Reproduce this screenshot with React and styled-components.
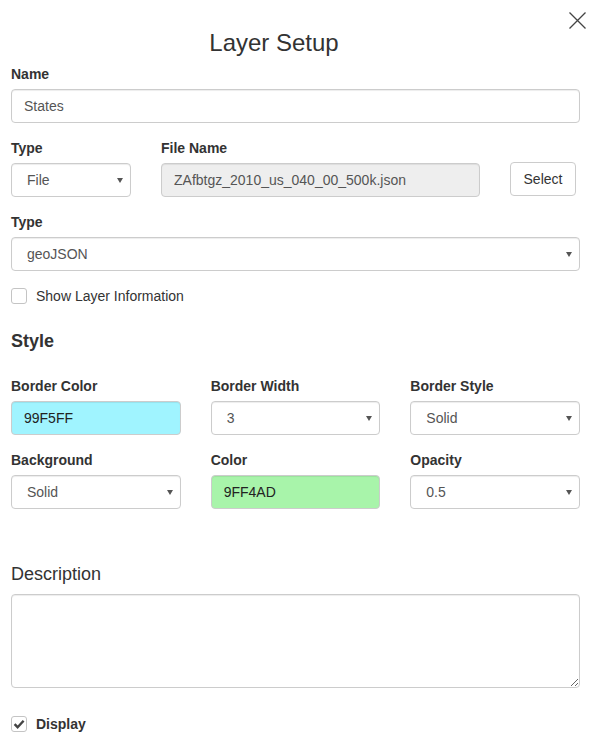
import React from 'react';
import styled, { createGlobalStyle } from 'styled-components';

const GlobalStyle = createGlobalStyle`
  html, body {
    margin: 0;
    padding: 0;
    background: #fff;
  }
  body {
    font-family: "Liberation Sans", Arial, Helvetica, sans-serif;
    font-size: 14px;
    line-height: 20px;
    color: #333;
  }
  *, *::before, *::after {
    box-sizing: border-box;
  }
`;

const Dialog = styled.div`
  width: 593px;
  padding: 12px 13px 16px 11px;
`;

const Header = styled.header`
  display: flex;
  flex-direction: column;
`;

const CloseButton = styled.button`
  align-self: flex-end;
  width: 17px;
  height: 17px;
  margin-right: -6px;
  padding: 0;
  border: 0;
  background: none;
  cursor: pointer;
  display: flex;
  svg {
    display: block;
  }
`;

const Title = styled.h2`
  margin: 0 0 8px;
  padding-right: 43px;
  font-size: 24px;
  font-weight: 400;
  line-height: 27px;
  text-align: center;
  color: #333;
`;

const Field = styled.div`
  display: flex;
  flex-direction: column;
  margin-bottom: ${(p) => (p.$last ? '0' : '15px')};
`;

const Label = styled.label`
  display: block;
  font-weight: 700;
  line-height: 20px;
  margin-bottom: 5px;
  color: #333;
`;

const controlBase = `
  display: block;
  width: 100%;
  height: 34px;
  border: 1px solid #ccc;
  border-radius: 4px;
  box-shadow: inset 0 1px 1px rgba(0, 0, 0, 0.075);
  font-family: "Liberation Sans", Arial, Helvetica, sans-serif;
  font-size: 14px;
  line-height: 20px;
  color: #555;
  outline: none;
`;

const TextInput = styled.input`
  ${controlBase}
  padding: 6px 12px;
  background: ${(p) => p.$bg || '#fff'};
  color: ${(p) => (p.$bg ? '#222' : '#555')};
  &:disabled,
  &[readonly] {
    background: #eee;
  }
`;

const SelectWrap = styled.div`
  position: relative;
  width: 100%;
  &::after {
    content: '';
    position: absolute;
    right: 8px;
    top: 15px;
    border-left: 3.5px solid transparent;
    border-right: 3.5px solid transparent;
    border-top: 5px solid #555;
    pointer-events: none;
  }
`;

const NativeSelect = styled.select`
  ${controlBase}
  appearance: none;
  -webkit-appearance: none;
  padding: 6px 24px 6px 15px;
  background: #fff;
`;

const Select = ({ value, options }) => (
  <SelectWrap>
    <NativeSelect defaultValue={value}>
      {options.map((o) => (
        <option key={o} value={o}>
          {o}
        </option>
      ))}
    </NativeSelect>
  </SelectWrap>
);

const FileRow = styled.div`
  display: grid;
  grid-template-columns: 120px 319px 66px;
  column-gap: 30px;
  align-items: end;
  margin-bottom: 15px;
`;

const Button = styled.button`
  height: 34px;
  margin-bottom: 1px;
  padding: 6px 12px;
  border: 1px solid #ccc;
  border-radius: 4px;
  background: #fff;
  font-family: "Liberation Sans", Arial, Helvetica, sans-serif;
  font-size: 14px;
  line-height: 20px;
  color: #333;
  cursor: pointer;
`;

const CheckRow = styled.label`
  display: flex;
  align-items: center;
  gap: 9px;
  height: 20px;
  font-weight: ${(p) => (p.$bold ? 700 : 400)};
  color: #333;
  cursor: pointer;
`;

const CheckBox = styled.span`
  width: 16px;
  height: 16px;
  flex: none;
  border: 1px solid #c4c4c4;
  border-radius: 3px;
  background: #fff;
  display: flex;
  align-items: center;
  justify-content: center;
  svg {
    display: block;
  }
`;

const SectionHeading = styled.h4`
  margin: 25px 0 25px;
  font-size: 18px;
  font-weight: 700;
  line-height: 20px;
  color: #333;
`;

const StyleGrid = styled.div`
  display: grid;
  grid-template-columns: repeat(3, 1fr);
  column-gap: 30px;
  row-gap: 15px;
`;

const DescriptionHeading = styled.h4`
  margin: 55px 0 10px;
  font-size: 18px;
  font-weight: 400;
  line-height: 20px;
  color: #333;
`;

const TextArea = styled.textarea`
  display: block;
  width: 100%;
  height: 94px;
  padding: 6px 12px;
  border: 1px solid #ccc;
  border-radius: 4px;
  box-shadow: inset 0 1px 1px rgba(0, 0, 0, 0.075);
  font-family: "Liberation Sans", Arial, Helvetica, sans-serif;
  font-size: 14px;
  color: #555;
  outline: none;
`;

const Footer = styled.div`
  margin-top: 26px;
`;

const Check = ({ checked, bold, children }) => (
  <CheckRow $bold={bold}>
    <CheckBox>
      {checked && (
        <svg width="12" height="12" viewBox="0 0 12 12">
          <path d="M1.6 6.2 L4.6 9.2 L10.6 2.8" fill="none" stroke="#444" strokeWidth="2.4" strokeLinejoin="miter" />
        </svg>
      )}
    </CheckBox>
    {children}
  </CheckRow>
);

export default function App() {
  return (
    <>
      <GlobalStyle />
      <Dialog>
        <Header>
          <CloseButton aria-label="Close">
            <svg width="17" height="17" viewBox="0 0 17 17">
              <path d="M0.5 0.5 L16.5 16.5 M16.5 0.5 L0.5 16.5" stroke="#444" strokeWidth="1.3" fill="none" />
            </svg>
          </CloseButton>
          <Title>Layer Setup</Title>
        </Header>

        <Field>
          <Label>Name</Label>
          <TextInput defaultValue="States" />
        </Field>

        <FileRow>
          <div>
            <Label>Type</Label>
            <Select value="File" options={['File', 'URL']} />
          </div>
          <div>
            <Label>File Name</Label>
            <TextInput readOnly defaultValue="ZAfbtgz_2010_us_040_00_500k.json" />
          </div>
          <Button>Select</Button>
        </FileRow>

        <Field>
          <Label>Type</Label>
          <Select value="geoJSON" options={['geoJSON', 'KML', 'Shapefile']} />
        </Field>

        <Check>Show Layer Information</Check>

        <SectionHeading>Style</SectionHeading>

        <StyleGrid>
          <Field $last>
            <Label>Border Color</Label>
            <TextInput $bg="#a0f4ff" defaultValue="99F5FF" />
          </Field>
          <Field $last>
            <Label>Border Width</Label>
            <Select value="3" options={['1', '2', '3', '4', '5']} />
          </Field>
          <Field $last>
            <Label>Border Style</Label>
            <Select value="Solid" options={['Solid', 'Dashed', 'Dotted']} />
          </Field>
          <Field $last>
            <Label>Background</Label>
            <Select value="Solid" options={['Solid', 'None', 'Hatched']} />
          </Field>
          <Field $last>
            <Label>Color</Label>
            <TextInput $bg="#a8f4aa" defaultValue="9FF4AD" />
          </Field>
          <Field $last>
            <Label>Opacity</Label>
            <Select value="0.5" options={['0.1', '0.25', '0.5', '0.75', '1']} />
          </Field>
        </StyleGrid>

        <DescriptionHeading>Description</DescriptionHeading>
        <TextArea />

        <Footer>
          <Check checked bold>
            Display
          </Check>
        </Footer>
      </Dialog>
    </>
  );
}
